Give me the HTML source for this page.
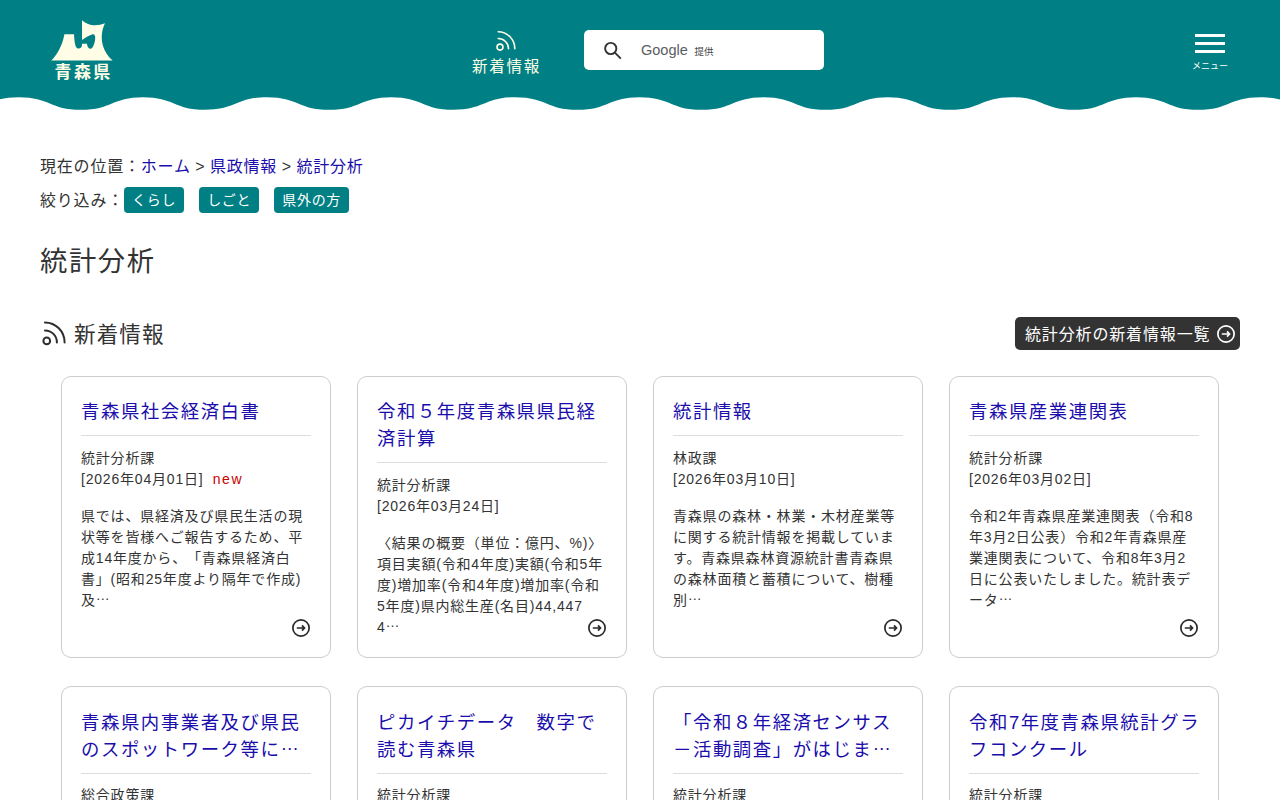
<!DOCTYPE html>
<html lang="ja">
<head>
<meta charset="utf-8">
<title>統計分析｜青森県庁ウェブサイト Aomori Prefectural Government</title>
<style>
html,body{margin:0;padding:0;}
body{width:1280px;height:800px;overflow:hidden;background:#fff;color:#333;
  font-family:"Liberation Sans","Noto Sans CJK JP",sans-serif;font-size:16px;line-height:1.5;position:relative;letter-spacing:0.8px;text-spacing-trim:space-all;}
a{color:#1a0dab;text-decoration:none;}
#header{position:absolute;left:0;top:0;width:1280px;height:112px;}
#header svg.bg{position:absolute;left:0;top:0;}
#logo{position:absolute;left:46px;top:14px;width:72px;height:72px;}
#logo svg{position:absolute;left:0;top:0;}
#logo .t{position:absolute;left:8.5px;top:46.5px;color:#fffde6;font-weight:bold;font-size:17px;line-height:24px;letter-spacing:2.4px;white-space:nowrap;}
#nav-new{position:absolute;left:456.5px;top:57px;width:100px;text-align:center;color:#fffde6;font-size:15.5px;line-height:20px;letter-spacing:1.8px;}
#nav-new svg{position:absolute;left:33.5px;top:-31px;}
#search{position:absolute;left:584px;top:30px;width:240px;height:40px;background:#fff;border-radius:5px;}
#search svg{position:absolute;left:18px;top:10px;}
#search .g{position:absolute;left:57px;top:10px;font-size:14.5px;line-height:20px;color:#5a5d61;letter-spacing:0;}
#search .p{position:absolute;left:110.5px;top:14px;font-size:9.5px;line-height:16px;color:#444;letter-spacing:0;}
#menu{position:absolute;left:1180px;top:34px;width:60px;text-align:center;color:#fff;font-size:9px;line-height:12px;letter-spacing:0;}
#menu i{display:block;width:30px;height:3px;background:#fff;margin:0 auto 5px;}
#menu span{display:block;margin-top:7px;}
#crumb{word-spacing:-0.7px;position:absolute;left:40px;top:155px;font-size:16px;line-height:24px;white-space:nowrap;}
#filter{position:absolute;left:40px;top:187px;font-size:16px;line-height:28px;white-space:nowrap;}
#filter a{display:inline-block;background:#008084;color:#fff;font-size:14px;line-height:26px;height:26px;padding:0 8px;border-radius:4px;margin-right:15px;letter-spacing:0.7px;vertical-align:top;margin-top:0px;}
h1{position:absolute;left:40px;top:241px;margin:0;font-size:27.3px;letter-spacing:1.6px;line-height:42px;font-weight:normal;color:#333;}
h2{position:absolute;left:74px;top:317px;margin:0;font-size:21.6px;letter-spacing:1.08px;line-height:36px;font-weight:normal;color:#333;white-space:nowrap;}
h2 svg{position:absolute;left:-34px;top:1px;}
#more{position:absolute;left:1015px;top:317px;width:225px;height:33px;background:#333;color:#fff;border-radius:5px;font-size:16px;line-height:36px;box-sizing:border-box;padding-left:10px;letter-spacing:0.85px;white-space:nowrap;}
#more svg{position:absolute;left:200.5px;top:7px;}
.card{position:absolute;width:270px;box-sizing:border-box;border:1px solid #ccc;border-radius:10px;background:#fff;padding:21px 19px 0 19px;}
.card h3{margin:0;white-space:nowrap;font-size:18.4px;letter-spacing:1.55px;line-height:27px;font-weight:normal;color:#1a0dab;padding-bottom:10px;border-bottom:1px solid #ddd;}
.card.r2 h3{position:relative;top:1px;}
.card .m{margin:11.5px 0 0;font-size:14px;line-height:21px;color:#333;}
.card .m em{font-style:normal;color:#c00;letter-spacing:1.6px;margin-left:4.5px;}
.card .d{margin:16px 0 0;font-size:14px;line-height:21px;color:#333;}
.el{position:relative;top:-0.32em;}
.card svg.ar{position:absolute;right:19px;bottom:19px;}
</style>
</head>
<body>
<div id="header">
<svg class="bg" width="1280" height="112" viewBox="0 0 1280 112"><path id="wave" fill="#008084" d="M-229.4 0V97.2C-198.3 97.2 -198.3 109.8 -167.3 109.8C-136.3 109.8 -136.3 97.2 -105.2 97.2C-74.2 97.2 -74.2 109.8 -43.2 109.8C-12.1 109.8 -12.1 97.2 18.9 97.2C49.9 97.2 49.9 109.8 81 109.8C112 109.8 112 97.2 143 97.2C174.1 97.2 174.1 109.8 205.1 109.8C236.1 109.8 236.1 97.2 267.2 97.2C298.2 97.2 298.2 109.8 329.2 109.8C360.3 109.8 360.3 97.2 391.3 97.2C422.3 97.2 422.3 109.8 453.4 109.8C484.4 109.8 484.4 97.2 515.4 97.2C546.5 97.2 546.5 109.8 577.5 109.8C608.5 109.8 608.5 97.2 639.5 97.2C670.6 97.2 670.6 109.8 701.6 109.8C732.6 109.8 732.6 97.2 763.7 97.2C794.7 97.2 794.7 109.8 825.7 109.8C856.8 109.8 856.8 97.2 887.8 97.2C918.8 97.2 918.8 109.8 949.9 109.8C980.9 109.8 980.9 97.2 1011.9 97.2C1043 97.2 1043 109.8 1074 109.8C1105 109.8 1105 97.2 1136.1 97.2C1167.1 97.2 1167.1 109.8 1198.1 109.8C1229.2 109.8 1229.2 97.2 1260.2 97.2C1291.2 97.2 1291.2 109.8 1322.3 109.8C1353.3 109.8 1353.3 97.2 1384.3 97.2V0Z"/></svg>
<div id="logo">
<svg width="72" height="50" viewBox="0 0 72 50"><path fill="#fffde6" d="M5.2 46.6C10 42 16.5 32 18.4 20.2L28 20.2C28.2 24 28.6 29 29.6 32C30.3 34 31.5 34.6 32.8 34.6C34.5 34.6 36 33.2 36 31L36 29.75L41 29.75C41.2 32.5 42.5 34.8 44.5 34.8C47 34.8 49.3 28 49.2 23.5C49.2 21 48 20 46.6 20.3C43.5 21.2 39.5 23.8 36 26L36 6.25C40 9.5 44 11.2 48.5 11.2C52.5 11.2 56 10.5 59 9.25C55.5 16 54.8 25 57.2 32.5C59 38 62 42.5 66.6 46.6Z"/></svg>
<div class="t">青森県</div>
</div>
<div id="nav-new"><svg width="30" height="30" viewBox="0 0 30 30" fill="none" stroke="#fffde6" stroke-width="1.6" stroke-linecap="round"><circle cx="10" cy="21.1" r="3"/><path d="M8.25 12.5A10.25 10.25 0 0 1 18.5 22.75M8.25 5.75A16.7 17 0 0 1 24.85 22.75"/></svg>新着情報</div>
<div id="search"><svg width="24" height="24" viewBox="0 0 24 24" fill="none" stroke="#333" stroke-width="1.9"><circle cx="8.75" cy="8.5" r="5.6"/><path d="M12.9 12.7L18.8 18.6"/></svg><span class="g">Google</span><span class="p">提供</span></div>
<div id="menu"><i></i><i></i><i></i><span>メニュー</span></div>
</div>

<div id="crumb">現在の位置：<a>ホーム</a> &gt; <a>県政情報</a> &gt; <a>統計分析</a></div>
<div id="filter">絞り込み：<a>くらし</a><a>しごと</a><a>県外の方</a></div>
<h1>統計分析</h1>
<h2><svg width="30" height="32" viewBox="0 0 30 32" fill="none" stroke="#2e2e2e" stroke-width="2" stroke-linecap="round"><circle cx="6.75" cy="22.9" r="3.35"/><path d="M5 12.4A11.9 11.9 0 0 1 16.9 24.4M5 4.4A19.7 20.1 0 0 1 24.6 24.5"/></svg>新着情報</h2>
<a id="more">統計分析の新着情報一覧<svg width="20" height="20" viewBox="0 0 20 20" fill="none" stroke="#fff" stroke-width="1.7"><circle cx="10" cy="10" r="8.15"/><path d="M5.8 10H13M11 7.4L13.5 10L11 12.6"/></svg></a>

<div id="cards">
<div class="card" style="left:61px;top:376px;height:282px"><h3>青森県社会経済白書</h3><p class="m">統計分析課<br>[2026年04月01日] <em>new</em></p><p class="d">県では、県経済及び県民生活の現<br>状等を皆様へご報告するため、平<br>成14年度から、「青森県経済白<br>書」(昭和25年度より隔年で作成)<br>及<span class="el">…</span></p><svg class="ar" width="20" height="20" viewBox="0 0 20 20" fill="none" stroke="#2a2a2a" stroke-width="1.7"><circle cx="10" cy="10" r="8.15"/><path d="M5.8 10H13M11 7.4L13.5 10L11 12.6"/></svg></div>
<div class="card" style="left:357px;top:376px;height:282px"><h3>令和５年度青森県県民経<br>済計算</h3><p class="m">統計分析課<br>[2026年03月24日]</p><p class="d">〈結果の概要（単位：億円、%)〉<br>項目実額(令和4年度)実額(令和5年<br>度)増加率(令和4年度)増加率(令和<br>5年度)県内総生産(名目)44,447<br>4<span class="el">…</span></p><svg class="ar" width="20" height="20" viewBox="0 0 20 20" fill="none" stroke="#2a2a2a" stroke-width="1.7"><circle cx="10" cy="10" r="8.15"/><path d="M5.8 10H13M11 7.4L13.5 10L11 12.6"/></svg></div>
<div class="card" style="left:653px;top:376px;height:282px"><h3>統計情報</h3><p class="m">林政課<br>[2026年03月10日]</p><p class="d">青森県の森林・林業・木材産業等<br>に関する統計情報を掲載していま<br>す。青森県森林資源統計書青森県<br>の森林面積と蓄積について、樹種<br>別<span class="el">…</span></p><svg class="ar" width="20" height="20" viewBox="0 0 20 20" fill="none" stroke="#2a2a2a" stroke-width="1.7"><circle cx="10" cy="10" r="8.15"/><path d="M5.8 10H13M11 7.4L13.5 10L11 12.6"/></svg></div>
<div class="card" style="left:949px;top:376px;height:282px"><h3>青森県産業連関表</h3><p class="m">統計分析課<br>[2026年03月02日]</p><p class="d">令和2年青森県産業連関表（令和8<br>年3月2日公表）令和2年青森県産<br>業連関表について、令和8年3月2<br>日に公表いたしました。統計表デ<br>ータ<span class="el">…</span></p><svg class="ar" width="20" height="20" viewBox="0 0 20 20" fill="none" stroke="#2a2a2a" stroke-width="1.7"><circle cx="10" cy="10" r="8.15"/><path d="M5.8 10H13M11 7.4L13.5 10L11 12.6"/></svg></div>
<div class="card r2" style="left:61px;top:686px;height:282px"><h3>青森県内事業者及び県民<br>のスポットワーク等に<span class="el">…</span></h3><p class="m">総合政策課<br>[2026年02月27日]</p><p class="d">青森県内事業者及び県民のスポッ<br>トワーク等に関する調査</p><svg class="ar" width="20" height="20" viewBox="0 0 20 20" fill="none" stroke="#2a2a2a" stroke-width="1.7"><circle cx="10" cy="10" r="8.15"/><path d="M5.8 10H13M11 7.4L13.5 10L11 12.6"/></svg></div>
<div class="card r2" style="left:357px;top:686px;height:282px"><h3>ピカイチデータ　数字で<br>読む青森県</h3><p class="m">統計分析課<br>[2026年02月20日]</p><p class="d">ピカイチデータ　数字で読む青森<br>県</p><svg class="ar" width="20" height="20" viewBox="0 0 20 20" fill="none" stroke="#2a2a2a" stroke-width="1.7"><circle cx="10" cy="10" r="8.15"/><path d="M5.8 10H13M11 7.4L13.5 10L11 12.6"/></svg></div>
<div class="card r2" style="left:653px;top:686px;height:282px"><h3>「令和８年経済センサス<br>－活動調査」がはじま<span class="el">…</span></h3><p class="m">統計分析課<br>[2026年02月16日]</p><p class="d">令和８年経済センサス－活動調査</p><svg class="ar" width="20" height="20" viewBox="0 0 20 20" fill="none" stroke="#2a2a2a" stroke-width="1.7"><circle cx="10" cy="10" r="8.15"/><path d="M5.8 10H13M11 7.4L13.5 10L11 12.6"/></svg></div>
<div class="card r2" style="left:949px;top:686px;height:282px"><h3>令和7年度青森県統計グラ<br>フコンクール</h3><p class="m">統計分析課<br>[2026年02月10日]</p><p class="d">令和7年度青森県統計グラフコン<br>クール</p><svg class="ar" width="20" height="20" viewBox="0 0 20 20" fill="none" stroke="#2a2a2a" stroke-width="1.7"><circle cx="10" cy="10" r="8.15"/><path d="M5.8 10H13M11 7.4L13.5 10L11 12.6"/></svg></div>
</div>
</body>
</html>
